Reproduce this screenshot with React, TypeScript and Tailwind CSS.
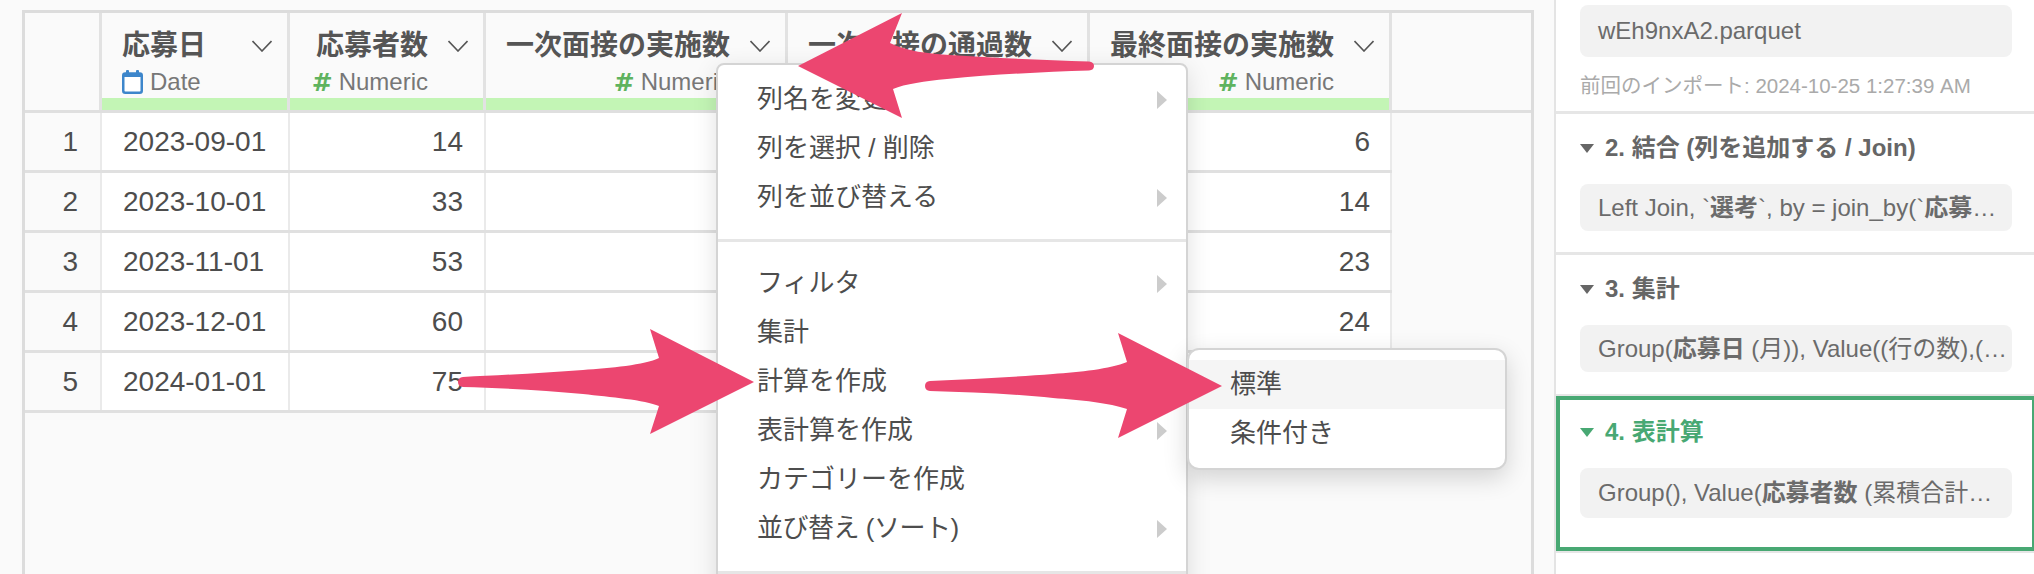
import { ReactNode } from "react";

const rows = [
  ["1", "2023-09-01", "14", "6"],
  ["2", "2023-10-01", "33", "14"],
  ["3", "2023-11-01", "53", "23"],
  ["4", "2023-12-01", "60", "24"],
  ["5", "2024-01-01", "75", ""],
];

function Chevron() {
  return (
    <svg width="20" height="12" viewBox="0 0 20 12" className="shrink-0">
      <path d="M0.5 1 L10 11 L19.5 1" fill="none" stroke="#555" strokeWidth="1.6" />
    </svg>
  );
}

function CalendarIcon() {
  return (
    <svg width="21" height="24" viewBox="0 0 21 24" className="shrink-0">
      <rect x="1.25" y="3.5" width="18.5" height="19.25" rx="2" fill="#fff" stroke="#3d86cb" strokeWidth="2.5" />
      <rect x="1.25" y="3.5" width="18.5" height="3.5" fill="#3d86cb" />
      <rect x="4" y="0" width="3" height="5" rx="1" fill="#3d86cb" />
      <rect x="14" y="0" width="3" height="5" rx="1" fill="#3d86cb" />
    </svg>
  );
}

function HeaderCell({ title, type, className }: { title: string; type: string; className: string }) {
  const isDate = type === "Date";
  return (
    <div className={`flex flex-col border-r-[3px] border-[#e2e2e2] ${className}`}>
      <div className="flex-1 pr-[15px]">
        <div className={`flex h-[58px] items-center pt-[8px] ${isDate ? "justify-between pl-[20px]" : "justify-end gap-[20px]"}`}>
          <span className="text-[28px] font-bold leading-none text-[#555] whitespace-nowrap">{title}</span>
          <Chevron />
        </div>
        <div className={`flex h-[22px] items-center ${isDate ? "gap-[7px] pl-[20px]" : "justify-end gap-[6px] pr-[40px]"}`}>
          {isDate ? (
            <CalendarIcon />
          ) : (
            <span className="text-[25px] font-bold leading-none text-[#5fb35f] [font-family:'DejaVu_Sans',sans-serif]">#</span>
          )}
          <span className="text-[24px] leading-none text-[#777]">{type}</span>
        </div>
      </div>
      <div className="h-[12px] bg-[#c3f5b5]" />
    </div>
  );
}

function BodyCell({ children, className }: { children?: ReactNode; className: string }) {
  return (
    <div className={`flex h-full items-center border-r-[2px] border-[#eaeaea] text-[28px] text-[#4d4d4d] ${className}`}>
      {children}
    </div>
  );
}

function MenuArrow() {
  return <div className="h-0 w-0 border-y-[9px] border-l-[10px] border-y-transparent border-l-[#cccccc]" />;
}

function MenuItem({ label, sub, className }: { label: string; sub?: boolean; className?: string }) {
  return (
    <div className="flex h-[49px] items-center justify-between pl-[39px] pr-[19px] text-[26px] text-[#4d4d4d]">
      <span className={className}>{label}</span>
      {sub && <MenuArrow />}
    </div>
  );
}

function StepTitle({ children, active }: { children: ReactNode; active?: boolean }) {
  return (
    <div className={`flex items-center gap-[11px] text-[24px] font-bold leading-none ${active ? "text-[#48a873]" : "text-[#666]"}`}>
      <svg width="14" height="9" viewBox="0 0 14 9" className="shrink-0">
        <path d="M0 0 H14 L7 9 Z" fill={active ? "#48a873" : "#666"} />
      </svg>
      <span>{children}</span>
    </div>
  );
}

function StepBox({ children, className }: { children: ReactNode; className: string }) {
  return (
    <div className={`flex items-center whitespace-nowrap rounded-[8px] bg-[#f2f2f2] px-[18px] text-[24px] leading-none text-[#6b6b6b] ${className}`}>
      <span>{children}</span>
    </div>
  );
}

export default function App() {
  return (
    <div className="relative flex h-[574px] w-[2034px] overflow-hidden bg-[#fafafa] [font-family:'Liberation_Sans','Noto_Sans_CJK_JP',sans-serif]">
      {/* data grid */}
      <main className="w-[1554px] shrink-0 pl-[22px] pt-[10px]">
        <div className="h-[564px] w-[1512px] border-x-[3px] border-t-[3px] border-[#dcdcdc]">
          <div className="flex h-[100px] border-b-[3px] border-[#dfdfdf]">
            <div className="w-[77px] border-r-[3px] border-[#e2e2e2]" />
            <HeaderCell className="w-[188px]" title="応募日" type="Date" />
            <HeaderCell className="w-[196px]" title="応募者数" type="Numeric" />
            <HeaderCell className="w-[302px]" title="一次面接の実施数" type="Numeric" />
            <HeaderCell className="w-[302px]" title="一次面接の通過数" type="Numeric" />
            <HeaderCell className="w-[302px]" title="最終面接の実施数" type="Numeric" />
          </div>
          {rows.map((r) => (
            <div key={r[0]} className="flex h-[60px] w-[1367px] border-b-[3px] border-[#e0e0e0] bg-white">
              <BodyCell className="w-[77px] justify-end bg-[#fafafa] pr-[22px]">{r[0]}</BodyCell>
              <BodyCell className="w-[188px] pl-[21px]">{r[1]}</BodyCell>
              <BodyCell className="w-[196px] justify-end pr-[21px]">{r[2]}</BodyCell>
              <BodyCell className="w-[302px]" />
              <BodyCell className="w-[302px]" />
              <BodyCell className="w-[302px] justify-end pr-[20px]">{r[3]}</BodyCell>
            </div>
          ))}
        </div>
      </main>

      {/* steps panel */}
      <aside className="flex-1 border-l-[2px] border-[#e4e4e4] bg-white">
        <div className="h-[114px] border-b-[3px] border-[#e6e6e6] px-[24px] pt-[5px]">
          <StepBox className="h-[52px] w-[432px]">wEh9nxA2.parquet</StepBox>
          <div className="mt-[19px] whitespace-nowrap text-[20.5px] leading-none text-[#aaa]">前回のインポート: 2024-10-25 1:27:39 AM</div>
        </div>
        <div className="h-[141px] border-b-[3px] border-[#e6e6e6] px-[24px] pt-[22px]">
          <StepTitle>2. 結合 (列を追加する / Join)</StepTitle>
          <StepBox className="mt-[24px] h-[47px] w-[432px]">
            Left Join, `<b>選考</b>`, by = join_by(`<b>応募</b>…
          </StepBox>
        </div>
        <div className="h-[141px] border-b-[2px] border-[#e6e6e6] px-[24px] pt-[22px]">
          <StepTitle>3. 集計</StepTitle>
          <StepBox className="mt-[24px] h-[47px] w-[432px]">
            Group(<b>応募日</b> (月)), Value((行の数),(…
          </StepBox>
        </div>
        <div className="h-[155px] border-[4px] border-[#48a873] px-[20px] pt-[20px]">
          <StepTitle active>4. 表計算</StepTitle>
          <StepBox className="mt-[24px] h-[50px] w-[432px]">
            Group(), Value(<b>応募者数</b> (累積合計…
          </StepBox>
        </div>
        <div className="h-[2px] bg-[#e6e6e6]" />
      </aside>

      {/* column menu, runs off the bottom of the page */}
      <div className="absolute left-[716px] top-[63px] w-[472px] rounded-t-[8px] border-[2px] border-[#d4d4d4] bg-white pb-[20px] pt-[10px] shadow-[0_6px_24px_rgba(0,0,0,0.12)]">
        <MenuItem label="列名を変更" sub />
        <MenuItem label="列を選択 / 削除" />
        <MenuItem label="列を並び替える" sub />
        <div className="my-[17px] h-[3px] bg-[#e6e6e6]" />
        <MenuItem label="フィルタ" sub />
        <MenuItem label="集計" />
        <MenuItem label="計算を作成" />
        <MenuItem label="表計算を作成" sub />
        <MenuItem label="カテゴリーを作成" />
        <MenuItem label="並び替え (ソート)" sub className="tracking-[-0.5px]" />
        <div className="mt-[18px] h-[3px] bg-[#e6e6e6]" />
      </div>

      {/* submenu */}
      <div className="absolute left-[1187px] top-[348px] h-[122px] w-[320px] rounded-[12px] border-[2px] border-[#d4d4d4] bg-white pt-[10px] shadow-[0_8px_24px_rgba(0,0,0,0.16)]">
        <div className="flex h-[49px] items-center bg-[#f5f5f5] pl-[41px] text-[26px] text-[#4d4d4d]">標準</div>
        <div className="flex h-[49px] items-center pl-[41px] text-[26px] text-[#4d4d4d]">条件付き</div>
      </div>

      {/* annotation arrows */}
      <svg className="pointer-events-none absolute left-0 top-0" width="2034" height="574" viewBox="0 0 2034 574">
        <path
          fill="#ec4670"
          d="M798 66 L902 13 L890 43 C905 51 930 54 950 55 C995 58 1045 60 1089 61.5 Q1094 62 1094 66 Q1094 70 1089 70.5 C1045 72 995 74 947 79 C925 81 905 84 893 89 L902 118 Z"
        />
        <path
          fill="#ec4670"
          d="M754 382 L650 329 L659 358 C645 365 610 368 583 370 C545 373 500 375 463 377 Q458 377.5 458 382 Q458 386.5 463 387 C500 388 545 390 583 394 C610 397 645 400 659 406 L650 434 Z"
        />
        <path
          fill="#ec4670"
          d="M1222 386 L1118 333 L1127 362 C1110 369 1080 372 1053 374 C1015 377 970 379 930 381 Q925 381.5 925 386 Q925 390.5 930 391 C970 392 1015 394 1053 398 C1080 400 1110 403 1127 409 L1118 438 Z"
        />
      </svg>
    </div>
  );
}
